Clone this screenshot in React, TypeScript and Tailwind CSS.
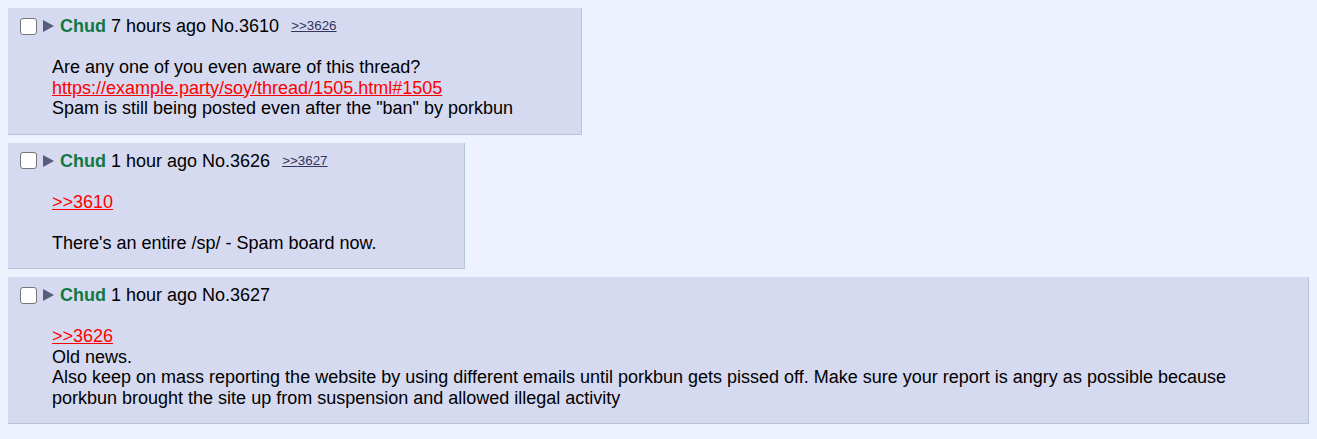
import React from "react";

function Header({ time, no, reply }: { time: string; no: string; reply?: string }) {
  return (
    <div className="flex items-center h-[20px] leading-[20px]">
      <span className="w-[17px] h-[17px] rounded-[3px] border border-[#767676] bg-white ml-[12px] shrink-0" />
      <svg width="11" height="12" viewBox="0 0 11 12" className="ml-[6px] shrink-0">
        <polygon points="0,0 11,6 0,12" fill="#5b5b7d" />
      </svg>
      <span className="ml-[6px] font-bold text-[#117743]">Chud</span>
      <span className="ml-[5px] text-black">{time} No.{no}</span>
      {reply && (
        <a className="ml-[12px] text-[13.4px] text-[#34345c] underline cursor-pointer">&gt;&gt;{reply}</a>
      )}
    </div>
  );
}

function Post({ width, children, header }: { width: string; children: React.ReactNode; header: React.ReactNode }) {
  return (
    <div className={`${width} bg-[#d6daf0] border-r border-b border-[#b7c5d9] pt-[8px] pb-[15px] mb-[8px]`}>
      {header}
      <div className="mt-[21px] pl-[44px] leading-[20.5px] text-black">{children}</div>
    </div>
  );
}

export default function App() {
  return (
    <div
      className="min-h-[439px] bg-[#eef2ff] p-[8px] text-[18px]"
      style={{ fontFamily: '"Liberation Sans", Arial, sans-serif' }}
    >
      <Post width="w-[574px]" header={<Header time="7 hours ago" no="3610" reply="3626" />}>
        <div>Are any one of you even aware of this thread?</div>
        <div>
          <a className="text-[#ff0000] underline">https://example.party/soy/thread/1505.html#1505</a>
        </div>
        <div>Spam is still being posted even after the "ban" by porkbun</div>
      </Post>
      <Post width="w-[457px]" header={<Header time="1 hour ago" no="3626" reply="3627" />}>
        <div>
          <a className="text-[#ff0000] underline">&gt;&gt;3610</a>
        </div>
        <div className="h-[20.5px]" />
        <div>There's an entire /sp/ - Spam board now.</div>
      </Post>
      <Post width="w-[1301px]" header={<Header time="1 hour ago" no="3627" />}>
        <div>
          <a className="text-[#ff0000] underline">&gt;&gt;3626</a>
        </div>
        <div>Old news.</div>
        <div className="pr-[70px]">
          Also keep on mass reporting the website by using different emails until porkbun gets pissed off. Make sure your report is angry as possible because porkbun brought the site up from suspension and allowed illegal activity
        </div>
      </Post>
    </div>
  );
}
